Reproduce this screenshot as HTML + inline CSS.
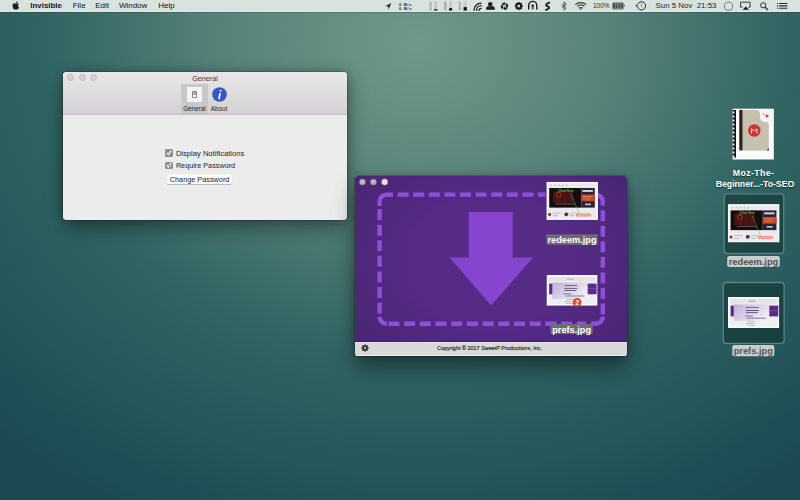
<!DOCTYPE html>
<html><head><meta charset="utf-8">
<style>
*{margin:0;padding:0;box-sizing:border-box}
html,body{width:800px;height:500px;overflow:hidden}
body{position:relative;font-family:"Liberation Sans",sans-serif;
background:radial-gradient(ellipse 621px 527px at 418px 42px, rgb(111,152,135) 0%, rgb(89,132,123) 30%, rgb(48,101,99) 60%, rgb(27,74,83) 100%, rgb(24,70,80) 140%);}
.a{position:absolute}
.t{position:absolute;white-space:nowrap}
#menubar{position:absolute;left:0;top:0;width:800px;height:12px;background:#d8e2de;border-bottom:1px solid #e0e9e5;box-shadow:0 1px 0 rgba(20,50,40,0.22)}
.mt{position:absolute;top:0.2px;height:11px;line-height:11px;font-size:8px;color:#141414;white-space:nowrap}
/* General window */
#gw{position:absolute;left:63.2px;top:72px;width:283.4px;height:148px;border-radius:3.5px;background:#ececec;
box-shadow:0 7px 20px rgba(0,0,0,0.4),0 0 9px rgba(0,0,0,0.22),0 0 0 0.5px rgba(0,0,0,0.25);overflow:hidden}
#gw .tb{position:absolute;left:0;top:0;width:284px;height:43px;background:linear-gradient(#e9e7e9,#d3d1d3);border-bottom:1px solid #c2c0c2}
.tl{position:absolute;width:7px;height:7px;border-radius:50%;background:#d3d1d3;border:0.6px solid #bfbdbf}
.cb{position:absolute;width:8px;height:7.5px;border-radius:1.5px;background:#8e8e93}
/* purple window */
#pw{position:absolute;left:354.6px;top:176px;width:272.4px;height:180px;border-radius:3px;overflow:hidden;
background:#d8d8d8;
box-shadow:0 11px 22px rgba(0,0,0,0.45),0 0 7px rgba(0,0,0,0.2),0 0 0 0.5px rgba(0,0,0,0.3)}
#pw .pb{position:absolute;left:0;top:0;width:272px;height:166px;background:radial-gradient(ellipse 175px 135px at 136px 85px,#572c89 0%,#552b86 45%,#4a2574 100%)}
#pw .ft{position:absolute;left:0;top:165.5px;width:272px;height:14.5px;background:#d8d8d8;border-top:1px solid #e6e6e6;border-bottom:1.2px solid #efefef;box-shadow:0 -1px 0 #3e1f6a}
.ptl{position:absolute;width:6.6px;height:6.6px;border-radius:50%}
.lbl{position:absolute;font-weight:bold;white-space:nowrap;text-align:center;border-radius:2px}
</style></head><body>

<svg width="0" height="0" style="position:absolute">
<defs>
<linearGradient id="lav" x1="0" y1="0" x2="1" y2="0.6"><stop offset="0" stop-color="#bfaed8"/><stop offset="1" stop-color="#f1edf5"/></linearGradient>
<symbol id="redeem" viewBox="0 0 52 38.5">
  <rect x="0" y="0" width="52" height="38.5" fill="#fbfbfb"/>
  <rect x="1.5" y="1.5" width="49" height="35.5" fill="#ebebef"/>
  <g fill="#b4b6c6"><rect x="4" y="3" width="1.4" height="1.3"/><rect x="8" y="3" width="1.4" height="1.3"/><rect x="12" y="3" width="1.4" height="1.3"/><rect x="16" y="3" width="1.4" height="1.3"/><rect x="20" y="3" width="1.4" height="1.3"/></g>
  <rect x="2.8" y="6.3" width="32.3" height="19.8" fill="#140c0f"/>
  <rect x="6.7" y="9.8" width="19.8" height="11.5" fill="#4c1414"/>
  <g fill="#3a1010"><rect x="9" y="9.8" width="0.8" height="11.5"/><rect x="15" y="9.8" width="0.8" height="11.5"/><rect x="21" y="9.8" width="0.8" height="11.5"/></g>
  <ellipse cx="12.2" cy="13" rx="2.8" ry="3.2" fill="#8a2a22"/>
  <ellipse cx="12.2" cy="13.4" rx="1.3" ry="1.8" fill="#2a0c0c"/>
  <rect x="9" y="21.8" width="20" height="1.2" fill="#5a4a4c"/>
  <text x="11.8" y="10.4" font-family="Liberation Sans" font-weight="bold" font-size="3.2" fill="#62c848">Click Here</text>
  <path d="M24.5 11.5 L33 32.4" stroke="#5cc83c" stroke-width="0.5"/>
  <rect x="35.1" y="6.3" width="13.7" height="19.8" fill="#262632"/>
  <rect x="36.4" y="8.3" width="10.5" height="1.9" fill="#d4d6e4"/>
  <rect x="35.1" y="12.8" width="13.7" height="6.9" fill="#c4462a"/>
  <rect x="36.5" y="14.5" width="10" height="0.8" fill="#e89070"/><rect x="36.5" y="16.8" width="8" height="0.8" fill="#e08060"/>
  <rect x="39" y="22" width="6" height="1.6" fill="#c0c4d4"/>
  <circle cx="3.2" cy="33" r="1.6" fill="#a83030"/>
  <circle cx="20.1" cy="32.8" r="1.9" fill="#3e1616"/><circle cx="20.5" cy="33.2" r="0.8" fill="#b07060"/>
  <g fill="#b0b0ba"><rect x="6.5" y="31.3" width="8" height="0.8"/><rect x="6.5" y="33.9" width="5" height="0.8"/><rect x="23.5" y="31.3" width="7" height="0.8"/><rect x="23.5" y="33.9" width="4.5" height="0.8"/></g>
  <rect x="30.4" y="32.4" width="14.2" height="2.2" fill="#f6b8ae" stroke="#e0503e" stroke-width="0.45"/>
</symbol>
<symbol id="prefs" viewBox="0 0 51.5 31">
  <rect x="0" y="0" width="51.5" height="31" fill="#fbfbfb"/>
  <rect x="1.8" y="1.8" width="48" height="27.4" fill="#efeef1"/>
  <rect x="1.8" y="1.8" width="48" height="4.6" fill="#e4e3e6"/>
  <rect x="20.5" y="3.6" width="7" height="0.9" fill="#a0a0a6"/>
  <rect x="5.9" y="7.5" width="35.6" height="16.5" fill="url(#lav)"/>
  <rect x="2.7" y="8.6" width="3.2" height="10.8" fill="#572a85"/>
  <rect x="41.5" y="8.6" width="9" height="10.8" fill="#5a2c88"/>
  <rect x="42" y="13" width="8" height="0.8" fill="#7a58a0"/>
  <g fill="#5a4a72"><rect x="18" y="10.2" width="13" height="0.8"/><rect x="18" y="13" width="13" height="0.9"/><rect x="18" y="15.2" width="12" height="0.9"/><rect x="17" y="18.7" width="8" height="0.7"/><rect x="19" y="20.8" width="19" height="0.7"/></g>
  <g fill="#9e9ca4"><rect x="20" y="24.3" width="7" height="0.6"/><rect x="18" y="26.3" width="9" height="0.6"/><rect x="20" y="28.2" width="7" height="0.6"/></g>
</symbol>
</defs></svg>
<div id="menubar">
  <svg class="a" style="left:11.7px;top:1px" width="7.4" height="8.6" viewBox="0 0 14 17"><path fill="#1e1e1e" d="M11.6 9.1c0-2 1.6-3 1.7-3-1-1.4-2.4-1.6-2.9-1.6-1.2-.1-2.4.7-3 .7-.6 0-1.6-.7-2.6-.7C3.4 4.5 2.1 5.3 1.4 6.6c-1.4 2.5-.4 6.1 1 8.1.7 1 1.5 2.1 2.5 2 1 0 1.4-.6 2.6-.6s1.5.6 2.6.6c1.1 0 1.8-1 2.4-2 .8-1.1 1.1-2.2 1.1-2.3 0 0-2.1-.8-2.1-3.3zM9.7 3.1c.5-.7.9-1.6.8-2.6-.8 0-1.8.5-2.4 1.2-.5.6-1 1.6-.8 2.5.9.1 1.8-.4 2.4-1.1z"/></svg>
  <div class="mt" style="left:30.3px;font-weight:bold;font-size:7.9px">Invisible</div>
  <div class="mt" style="left:72.7px">File</div>
  <div class="mt" style="left:95.2px">Edit</div>
  <div class="mt" style="left:118.9px">Window</div>
  <div class="mt" style="left:158.2px">Help</div>
  <div class="mt" style="left:593px;font-size:6.5px;color:#2a2a2a">100%</div>
  <div class="mt" style="left:655.5px;font-size:7.9px;color:#222">Sun 5 Nov</div>
  <div class="mt" style="left:696.7px;font-size:7.9px;color:#222">21:53</div>
  <svg class="a" style="left:0;top:0" width="800" height="12" viewBox="0 0 800 12">
    <!-- location arrow -->
    <path d="M391.2 3 L385.3 6.2 L388.2 6.6 L388.7 9.5 Z" fill="#222"/>
    <!-- net speed -->
    <text x="398.9" y="5.5" font-family="Liberation Sans" font-weight="bold" font-size="4.4" letter-spacing="0.55" fill="#333">0 B/s</text>
    <text x="398.9" y="10" font-family="Liberation Sans" font-weight="bold" font-size="4.4" letter-spacing="0.55" fill="#333">0 B/s</text>
    <!-- mem bars -->
    <g fill="#8a8e8c">
      <rect x="429.6" y="1.8" width="2" height="8.5" opacity="0.6"/>
      <rect x="444.1" y="1.8" width="2.4" height="8.5" opacity="0.6"/>
      <rect x="458.8" y="1.8" width="2" height="8.5" opacity="0.6"/>
    </g>
    <g fill="#c4cac7"><rect x="434" y="1.5" width="3.4" height="9"/><rect x="449" y="1.5" width="3.2" height="9"/><rect x="463.6" y="1.5" width="3.2" height="9"/></g>
    <g fill="#111"><rect x="434" y="9.3" width="3.4" height="1.2"/><rect x="449" y="8.2" width="3.2" height="2.3"/><rect x="463.6" y="7.1" width="3.2" height="3.4"/></g>
    <!-- broadcast -->
    <g fill="none" stroke="#1e1e1e" stroke-width="1.3" stroke-linecap="round">
      <path d="M474 10.3 A7.2 7.2 0 0 1 481.2 3.1"/>
      <path d="M476.6 10.3 A4.6 4.6 0 0 1 481.2 5.7"/>
      <path d="M479.2 10.3 A2 2 0 0 1 481.2 8.3"/>
    </g>
    <!-- person -->
    <rect x="488.2" y="2.2" width="4.1" height="4.1" rx="1" fill="#1e1e1e"/>
    <path d="M486.2 9.8 V8.2 Q486.2 6.2 488.3 6.2 H492.6 Q494.8 6.2 494.8 8.2 V9.8 Z" fill="#1e1e1e"/>
    <!-- aperture -->
    <circle cx="504.5" cy="6.1" r="2.7" fill="none" stroke="#1e1e1e" stroke-width="1.9" stroke-dasharray="3.45 0.8" transform="rotate(30 504.5 6.1)"/>
    <g stroke="#1e1e1e" stroke-width="0.8" fill="none"><path d="M503 3.9 L505 5.4"/><path d="M506.9 4.9 L505.8 7"/><path d="M506 8.4 L503.9 7.1"/><path d="M502 7.4 L503.1 5.2"/></g>
    <!-- gear -->
    <g transform="translate(518.8,6.1)"><circle r="2.6" fill="none" stroke="#1e1e1e" stroke-width="1.8"/>
      <g fill="#1e1e1e"><rect x="-0.75" y="-4" width="1.5" height="8"/><rect x="-0.75" y="-4" width="1.5" height="8" transform="rotate(45)"/><rect x="-0.75" y="-4" width="1.5" height="8" transform="rotate(90)"/><rect x="-0.75" y="-4" width="1.5" height="8" transform="rotate(135)"/></g>
      <circle r="1.35" fill="#d8e2de"/></g>
    <!-- arch -->
    <path d="M528.7 9.5 V5.4 A4.05 4.05 0 0 1 536.8 5.4 V9.5" fill="none" stroke="#1e1e1e" stroke-width="1.4"/>
    <circle cx="532.7" cy="5.8" r="1.3" fill="#1e1e1e"/><path d="M531.6 6.8 L533.8 6.8 L533.5 9.6 L531.9 9.6 Z" fill="#555a58"/>
    <!-- S -->
    <path d="M549.9 2.3 Q546.2 3.5 546.1 5 Q546 6.1 547.9 6.5 Q549.6 6.9 548.9 8.2 Q548.2 9.4 545.3 10.1" fill="none" stroke="#1e1e1e" stroke-width="1.8" stroke-linecap="butt"/>
    <!-- bluetooth -->
    <path d="M561.6 4.3 L566.3 7.9 L564 10.3 V1.9 L566.3 4.3 L561.6 7.9" fill="none" stroke="#4a4a4a" stroke-width="0.9"/>
    <!-- wifi -->
    <g fill="none" stroke="#3a3a3a" stroke-width="1.2">
      <path d="M575.3 4.6 A8.5 8.5 0 0 1 586.3 4.6"/>
      <path d="M577.1 6.4 A6 6 0 0 1 584.5 6.4"/>
      <path d="M578.9 8.2 A3.3 3.3 0 0 1 582.7 8.2"/>
    </g>
    <path d="M579.9 9 L580.8 10 L581.7 9 Z" fill="#3a3a3a"/>
    <!-- battery -->
    <rect x="612.2" y="2.2" width="11.6" height="7.4" rx="1.6" fill="#7c7e7d"/>
    <rect x="623.8" y="4.6" width="1.2" height="2.2" fill="#7c7e7d"/>
    <g fill="none" stroke="#1a1a1a" stroke-width="0.9"><path d="M614.2 3.6 Q612.9 5.9 614.2 8.2"/><path d="M617.2 4.2 L615.8 5.9 L617.2 7.6"/><path d="M618.8 4.2 L620.2 5.9 L618.8 7.6"/><path d="M621.8 3.6 Q623.1 5.9 621.8 8.2"/></g>
    <!-- time machine -->
    <path d="M637.65 4.5 A4.1 4.1 0 1 1 637.46 6.61" fill="none" stroke="#2a2a2a" stroke-width="1"/>
    <circle cx="636.6" cy="5.6" r="0.95" fill="#1a1a1a"/>
    <path d="M641.3 3.9 V6.1 L642.5 7.1" fill="none" stroke="#555" stroke-width="0.6"/>
    <!-- circle -->
    <circle cx="728.5" cy="6.3" r="4.1" fill="none" stroke="#6a6e6c" stroke-width="0.9"/>
    <!-- airplay -->
    <path d="M742.3 7.2 H740.6 V2.2 H750.1 V7.2 H748.4" fill="none" stroke="#2a2a2a" stroke-width="0.9"/>
    <path d="M742.6 9.7 L749 9.7 L745.8 6.5 Z" fill="#1a1a1a"/>
    <!-- search -->
    <circle cx="763.2" cy="5.3" r="2.6" fill="none" stroke="#2a2a2a" stroke-width="1"/>
    <path d="M765.1 7.2 L768 10" stroke="#2a2a2a" stroke-width="1.2"/>
    <!-- list -->
    <g stroke="#2a2a2a" stroke-width="1.1"><path d="M779.2 3.5 H787.4 M779.2 5.9 H787.4 M779.2 8.3 H787.4"/><path d="M777 3.5 H778.2 M777 5.9 H778.2 M777 8.3 H778.2"/></g>
  </svg>
</div>

<!-- General window -->
<div id="gw">
  <div class="tb"></div>
  <div class="tl" style="left:3.9px;top:2.1px"></div>
  <div class="tl" style="left:15.4px;top:2.1px"></div>
  <div class="tl" style="left:26.9px;top:2.1px"></div>
  <div class="t" style="left:129px;top:1.5px;font-size:7.2px;line-height:9px;color:#3c3c3c">General</div>
  <div class="a" style="left:118px;top:12px;width:27px;height:30px;background:#c9c8c9"></div>
  <div class="a" style="left:123.5px;top:14.5px;width:15.5px;height:15.5px;background:#f4f4f4"></div>
  <div class="a" style="left:129px;top:18.5px;width:4.6px;height:7px;border:0.7px solid #8e8e8e;border-radius:0.6px;background:linear-gradient(#a8a8a8 0,#a8a8a8 55%,#f8f8f8 55%)"></div>
  <div class="t" style="left:120px;top:32.5px;font-size:6.3px;line-height:8px;color:#222">General</div>
  <svg class="a" style="left:148.5px;top:15px" width="15" height="15" viewBox="0 0 15 15"><circle cx="7.5" cy="7.5" r="7.3" fill="#3456cc"/><circle cx="8.6" cy="3.7" r="1.05" fill="#fff"/><path d="M7.2 5.9 L9 5.9 L7.9 11.3 Q7.7 12 8.6 11.8 L8.5 12.3 Q6.1 12.9 6.2 11.3 Z" fill="#fff"/></svg>
  <div class="t" style="left:147.5px;top:32.5px;font-size:6.3px;line-height:8px;color:#222">About</div>
  <div class="cb" style="left:102px;top:77.3px"></div>
  <div class="cb" style="left:102px;top:89.7px"></div>
  <svg class="a" style="left:102px;top:77.3px" width="8" height="20" viewBox="0 0 8 20"><path d="M1.8 3.8 L3.4 5.6 L6.2 1.6" fill="none" stroke="#fff" stroke-width="1.1"/><path d="M1.8 16.2 L3.4 18 L6.2 14" fill="none" stroke="#fff" stroke-width="1.1"/></svg>
  <div class="t" style="left:112.7px;top:76.7px;font-size:7.6px;line-height:10px;color:#1e1e1e">Display Notifications</div>
  <div class="t" style="left:112.7px;top:88.8px;font-size:7.25px;line-height:10px;color:#1e1e1e">Require Password</div>
  <div class="a" style="left:104px;top:102.3px;width:65px;height:10.2px;background:#f9f9f9;border-radius:1.5px;box-shadow:0 0.5px 0.8px rgba(0,0,0,0.2)"></div>
  <div class="t" style="left:106.6px;top:102.6px;font-size:7.3px;line-height:10px;color:#2a2a2a">Change Password</div>
</div>

<!-- purple window -->
<div id="pw">
  <div class="pb"></div>
  <svg class="a" style="left:0;top:0" width="40" height="12" viewBox="354.6 176 40 12">
    <circle cx="362" cy="182" r="3.1" fill="#bdbcb8" stroke="#6a5e7e" stroke-width="0.5"/>
    <circle cx="373" cy="182" r="3.1" fill="#b9b9b3" stroke="#6a5e7e" stroke-width="0.5"/>
    <circle cx="384.3" cy="182" r="3.2" fill="#e6e6e8" stroke="#766a88" stroke-width="0.5"/>
  </svg>
  <svg class="a" style="left:0;top:0" width="272" height="166" viewBox="354.6 176 272 166">
    <g fill="none" stroke="#8c50da" stroke-width="4.4">
      <path d="M379.2 206 V201.6 A7 7 0 0 1 386.2 194.6 H392.6"/>
      <path d="M397.2 194.6 H545" stroke-dasharray="11 4.6"/>
      <path d="M592 194.6 H595.4 A7 7 0 0 1 602.4 201.6 V205.6"/>
      <path d="M379.2 209.2 V315" stroke-dasharray="11 4.55"/>
      <path d="M602.4 210.2 V315" stroke-dasharray="11 4.55"/>
      <path d="M379.2 318.6 V316.8 A7 7 0 0 0 386.2 323.8 H386.5"/>
      <path d="M602.4 318.6 V316.8 A7 7 0 0 1 595.4 323.8 H590.5"/>
      <path d="M388 323.8 H586" stroke-dasharray="11 4.7"/>
    </g>
    <path d="M468.4 212 H512.3 V257.6 H532.7 L490.8 305.6 L449.2 257.6 H468.4 Z" fill="#8745cf"/>
    <!-- redeem thumb -->
    <use href="#redeem" x="545.8" y="181.8" width="52" height="38.1" preserveAspectRatio="none"/>
    <rect x="545.9" y="234.4" width="51.5" height="10.4" fill="#6f6a78"/>
    <text x="571.6" y="243.3" text-anchor="middle" font-family="Liberation Sans" font-weight="bold" font-size="9.2" fill="#fff">redeem.jpg</text>
    <!-- prefs thumb -->
    <use href="#prefs" x="546.1" y="275" width="51.1" height="30.8" preserveAspectRatio="none"/>
    <circle cx="576.7" cy="302.4" r="4.4" fill="#e8402e"/>
    <text x="576.7" y="305.3" text-anchor="middle" font-family="Liberation Sans" font-weight="bold" font-size="7" fill="#fff">2</text>
    <rect x="550" y="324" width="42.3" height="10" fill="#6f6a78"/>
    <text x="571.2" y="332.6" text-anchor="middle" font-family="Liberation Sans" font-weight="bold" font-size="9.2" fill="#fff">prefs.jpg</text>
  </svg>
  <div class="ft"></div>
  <svg class="a" style="left:6.4px;top:168px" width="8" height="8" viewBox="-4 -4 8 8"><circle r="2.1" fill="none" stroke="#2e2e2e" stroke-width="1.5"/><g fill="#2e2e2e"><rect x="-0.55" y="-3.8" width="1.1" height="7.6"/><rect x="-0.55" y="-3.8" width="1.1" height="7.6" transform="rotate(45)"/><rect x="-0.55" y="-3.8" width="1.1" height="7.6" transform="rotate(90)"/><rect x="-0.55" y="-3.8" width="1.1" height="7.6" transform="rotate(135)"/></g><circle r="0.9" fill="#e0e0e0"/></svg>
  <div class="t" style="left:82.5px;top:169px;font-size:5.46px;line-height:7px;color:#1e1e1e;-webkit-text-stroke:0.15px #1e1e1e">Copyright © 2017 SweetP Productions, Inc.</div>
</div>

<!-- desktop icons -->
<svg class="a" style="left:700px;top:95px" width="100" height="270" viewBox="700 95 100 270">
  <!-- moz book -->
  <rect x="732.6" y="108.7" width="41.2" height="50.8" fill="#fafafa"/>
  <path d="M739.3 109.9 H757 C760 109.9 760 113 760 116 C760 120 762 122 766 122 C768 122 768.8 122.8 768.8 124.5 V150.4 H739.3 Z" fill="#c6c0af"/>
  <rect x="739.3" y="109.9" width="3.2" height="40.5" fill="#2e2520"/>
  <path d="M760 110 L773.5 110 L773.5 124 C771 124 768 122 766 122 C762 122 760 120 760 116 Z" fill="#f4f4f4"/>
  <path d="M766.5 150.4 L768.8 148 V150.4 Z" fill="#3a3028"/>
  <rect x="732.6" y="110" width="3.4" height="47.5" fill="#151515"/>
  <g fill="#fafafa"><rect x="732.6" y="111.5" width="1.8" height="2"/><rect x="732.6" y="115.5" width="1.8" height="2"/><rect x="732.6" y="119.5" width="1.8" height="2"/><rect x="732.6" y="123.5" width="1.8" height="2"/><rect x="732.6" y="127.5" width="1.8" height="2"/><rect x="732.6" y="131.5" width="1.8" height="2"/><rect x="732.6" y="135.5" width="1.8" height="2"/><rect x="732.6" y="139.5" width="1.8" height="2"/><rect x="732.6" y="143.5" width="1.8" height="2"/><rect x="732.6" y="147.5" width="1.8" height="2"/><rect x="732.6" y="151.5" width="1.8" height="2"/><rect x="732.6" y="155.5" width="1.8" height="2"/></g>
  <rect x="747.5" y="127.2" width="14" height="2.2" rx="1" fill="#d89a7e" opacity="0.8"/>
  <circle cx="754.3" cy="130.5" r="6.2" fill="#c9382c"/>
  <path d="M751.6 133.5 V128.8 L754.3 131 L757 128.8 V133.5" fill="none" stroke="#f4e0d8" stroke-width="1"/>
  <circle cx="767" cy="116" r="1.6" fill="#e04030"/>
  <path d="M763 113.5 L765 115" stroke="#6a8ac0" stroke-width="0.8"/>
  <!-- redeem selection -->
  <rect x="724.2" y="193.8" width="59.5" height="59.5" rx="3" fill="rgba(12,42,40,0.5)" stroke="#5a8482" stroke-width="1.3"/>
  <use href="#redeem" x="727.8" y="204" width="51.8" height="38.6" preserveAspectRatio="none"/>
  <rect x="727.2" y="256" width="52.6" height="11" rx="2" fill="#c9cecc"/>
  <text x="753.5" y="265.2" text-anchor="middle" font-family="Liberation Sans" font-weight="bold" font-size="9.3" fill="#555">redeem.jpg</text>
  <!-- prefs selection -->
  <rect x="723.3" y="282.5" width="60.8" height="60.8" rx="3" fill="rgba(12,42,40,0.5)" stroke="#5a8482" stroke-width="1.3"/>
  <use href="#prefs" x="727.9" y="297" width="51.4" height="31" preserveAspectRatio="none"/>
  <rect x="732.3" y="344.9" width="42" height="11.4" rx="2" fill="#c9cecc"/>
  <text x="753.3" y="354.4" text-anchor="middle" font-family="Liberation Sans" font-weight="bold" font-size="9.3" fill="#555">prefs.jpg</text>
</svg>
<div class="t" style="left:712.5px;width:82px;text-align:center;top:168.2px;font-size:8.8px;line-height:10px;font-weight:bold;letter-spacing:0.36px;color:#fff;text-shadow:0 0.5px 1.5px rgba(0,0,0,0.6)">Moz-The-</div>
<div class="t" style="left:714px;width:82px;text-align:center;top:178.8px;font-size:8.8px;line-height:10px;font-weight:bold;letter-spacing:-0.05px;color:#fff;text-shadow:0 0.5px 1.5px rgba(0,0,0,0.6)">Beginner...-To-SEO</div>
</body></html>
